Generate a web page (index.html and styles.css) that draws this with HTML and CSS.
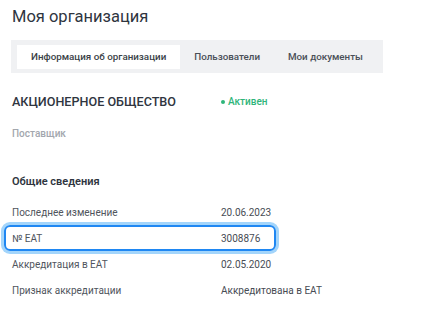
FILE: index.html
```html
<!DOCTYPE html>
<html lang="ru">
<head>
  <meta charset="utf-8"/>
  <meta name="viewport" content="width=device-width"/>
  <title>Моя организация</title>
  <link rel="stylesheet" href="styles.css">
</head>
<body>
  <div class="page">
    <h1>Моя организация</h1>
    <nav class="tabs">
      <span class="tab active">Информация об организации</span>
      <span class="tab">Пользователи</span>
      <span class="tab">Мои документы</span>
    </nav>

    <div class="org">
      <span class="org-name">АКЦИОНЕРНОЕ ОБЩЕСТВО</span>
      <span class="status"><i class="dot"></i>Активен</span>
    </div>
    <div class="role">Поставщик</div>

    <h3>Общие сведения</h3>
    <div class="rows">
      <div class="row"><span>Последнее изменение</span><span class="val">20.06.2023</span></div>
      <div class="row selected"><span>№ EAT</span><span class="val">3008876</span></div>
      <div class="row"><span>Аккредитация в EAT</span><span class="val">02.05.2020</span></div>
      <div class="row"><span>Признак аккредитации</span><span class="val">Аккредитована в EAT</span></div>
    </div>
    <div class="divider"></div>
  </div>
</body>
</html>
```

FILE: styles.css
```css
body {
  margin: 0; background: #fff;
  color: #333840; font-family: Roboto, "Liberation Sans", sans-serif;
}
.page { padding: 5px 0 0 12px; }
h1 { font-size: 16.5px; line-height: 24px; font-weight: 400; margin: 0; color: #2f3540; }
.tabs {
  display: flex; margin: 11px 0 0 -1px; width: 372px; height: 33px; box-sizing: border-box;
  padding: 5px 5px 4px 6px; background: #f0f1f3;
}
.tab { padding: 0 14px; font-size: 9.8px; line-height: 24px; font-weight: 500; color: #4a4f57; white-space: nowrap; }
.tab.active { background: #fff; color: #3a3f47; }

.org { display: grid; grid-template-columns: 209px auto; margin-top: 21px; line-height: 16px; }
.org-name { font-size: 12.6px; font-weight: 500; color: #2f3540; }
.status { font-size: 10px; font-weight: 500; color: #2fb57a; display: flex; align-items: center; }
.dot { width: 4px; height: 4px; border-radius: 50%; background: #2fb57a; margin-right: 3px; }
.role { margin-top: 16px; font-size: 10px; line-height: 16px; font-weight: 500; color: #a3a7ae; }

h3 { margin: 32px 0 0; font-size: 11px; line-height: 16px; font-weight: 600; color: #2f3540; }
.rows { margin: 9px 0 0 -8px; width: 272px; }
.row {
  display: grid; grid-template-columns: 209px auto; height: 26px; box-sizing: border-box;
  padding: 0 6px; border: 2px solid transparent; border-radius: 6px;
  align-items: center; font-size: 10px; color: #50555d; white-space: nowrap;
}
.row .val { color: #474c54; }
.row.selected { border-color: #1f87f2; box-shadow: 0 0 0 3px #a3d5fb; }
.divider { margin-top: 28px; margin-left: 1px; border-top: 1px solid #f4f5f7; }
```
